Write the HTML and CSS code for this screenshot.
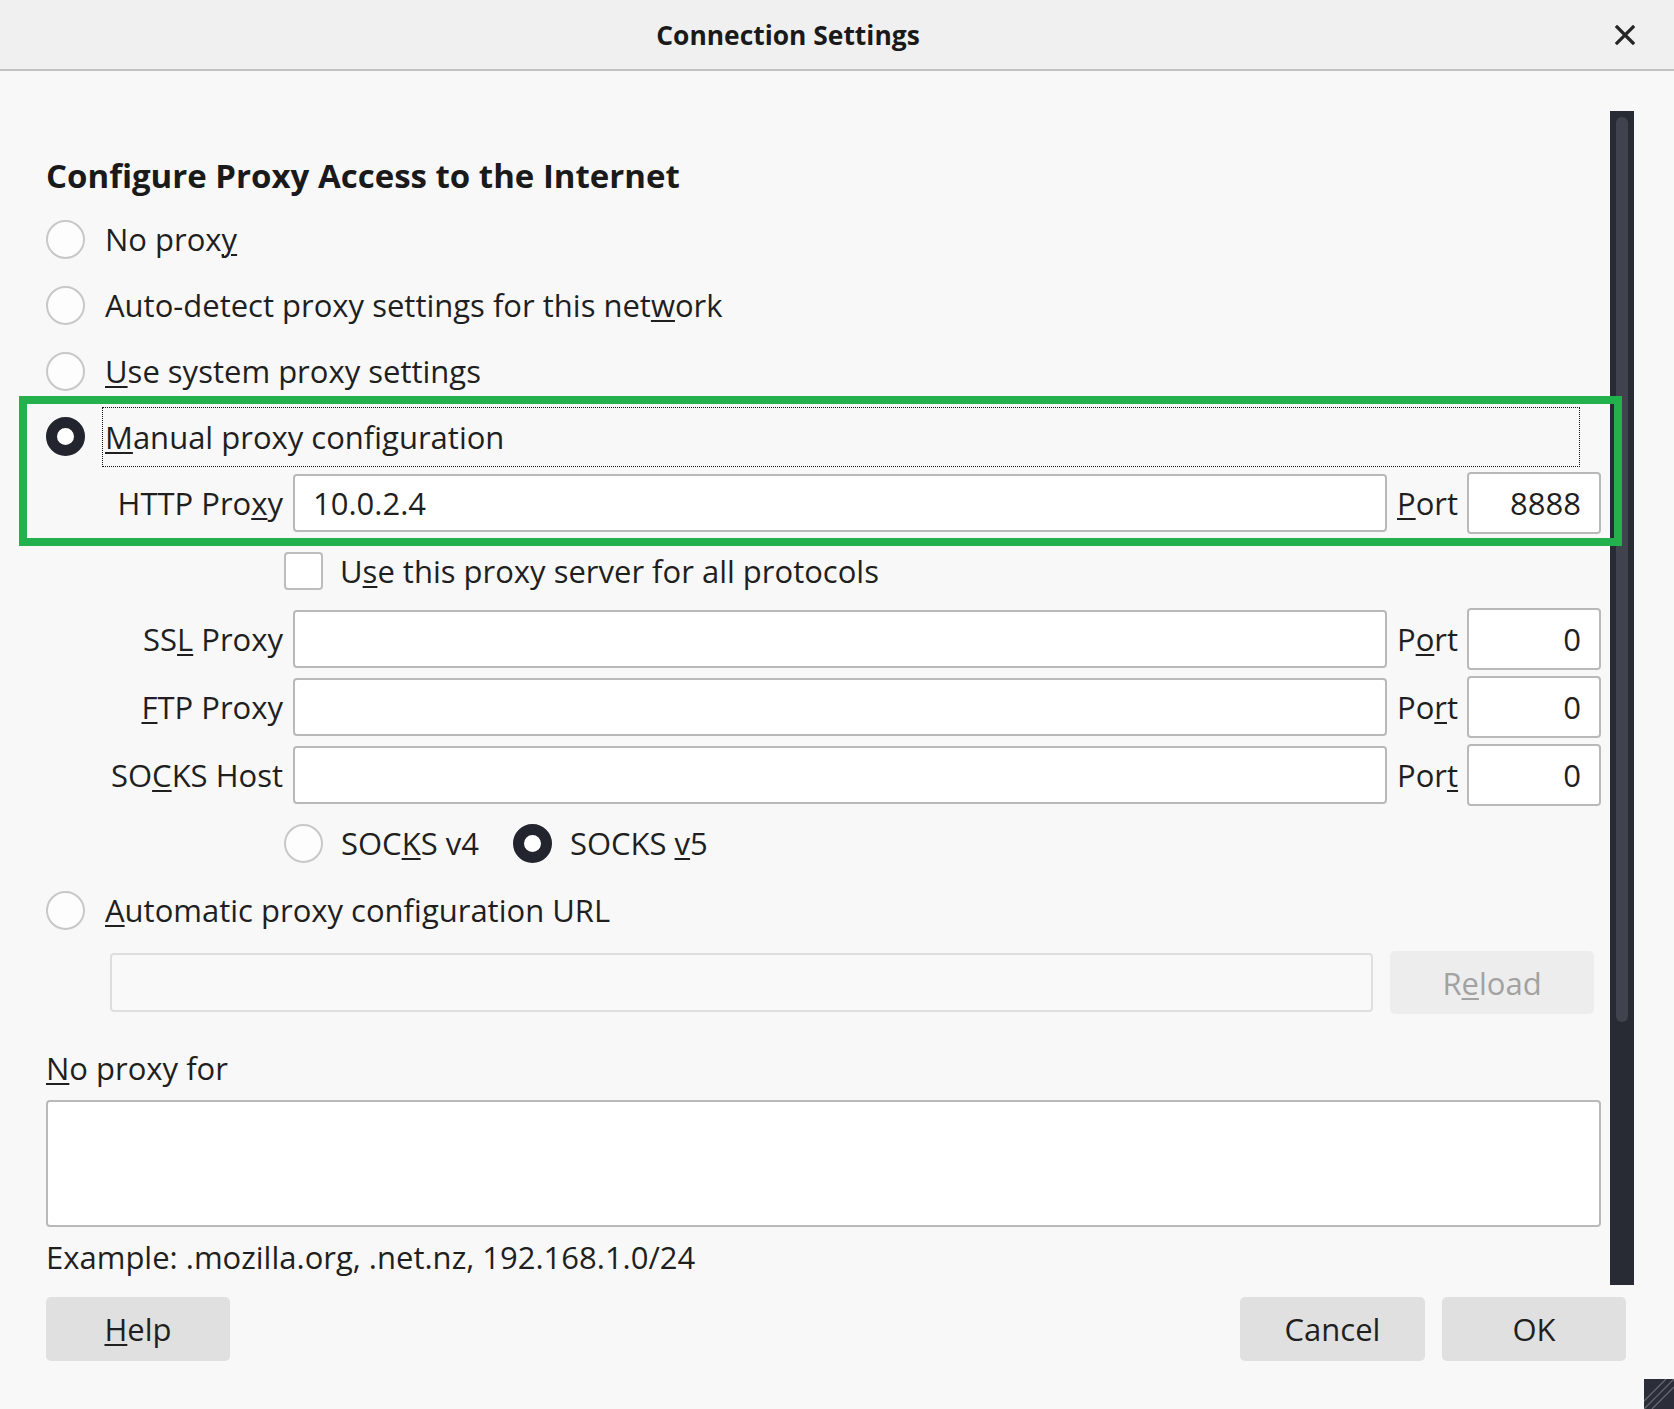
FILE: index.html
```html
<!DOCTYPE html>
<html lang="en">
<head>
<meta charset="utf-8">
<title>Connection Settings</title>
<link rel="stylesheet" href="styles.css">
</head>
<body>
<div class="window">
  <header class="titlebar">
    <div class="title">Connection Settings</div>
    <button class="close" aria-label="Close">
      <svg width="20" height="20" viewBox="0 0 20 20"><path d="M2 2 L18 18 M18 2 L2 18" stroke="#262626" stroke-width="3.2" stroke-linecap="square"/></svg>
    </button>
  </header>

  <div class="main">
    <div class="content">
      <h1 class="heading">Configure Proxy Access to the Internet</h1>

      <div class="radio-row"><span class="radio"></span><span class="rlabel">No prox<u>y</u></span></div>
      <div class="radio-row"><span class="radio"></span><span class="rlabel">Auto-detect proxy settings for this net<u>w</u>ork</span></div>
      <div class="radio-row"><span class="radio"></span><span class="rlabel"><u>U</u>se system proxy settings</span></div>
      <div class="radio-row manual"><span class="radio checked"></span><span class="rlabel focus"><u>M</u>anual proxy configuration</span></div>

      <div class="proxy-grid">
        <span class="plabel">HTTP Pro<u>x</u>y</span>
        <div class="field">10.0.2.4</div>
        <span class="portlabel"><u>P</u>ort</span>
        <div class="field port">8888</div>

        <div class="span-row"><span class="checkbox"></span><span>U<u>s</u>e this proxy server for all protocols</span></div>

        <span class="plabel">SS<u>L</u> Proxy</span>
        <div class="field"></div>
        <span class="portlabel">P<u>o</u>rt</span>
        <div class="field port">0</div>

        <span class="plabel"><u>F</u>TP Proxy</span>
        <div class="field"></div>
        <span class="portlabel">Po<u>r</u>t</span>
        <div class="field port">0</div>

        <span class="plabel">SO<u>C</u>KS Host</span>
        <div class="field"></div>
        <span class="portlabel">Por<u>t</u></span>
        <div class="field port">0</div>

        <div class="span-row">
          <span class="radio"></span><span class="vlabel">SOC<u>K</u>S v4</span>
          <span class="radio checked"></span><span class="vlabel">SOCKS <u>v</u>5</span>
        </div>
      </div>

      <div class="radio-row"><span class="radio"></span><span class="rlabel"><u>A</u>utomatic proxy configuration URL</span></div>

      <div class="url-row">
        <div class="field disabled"></div>
        <div class="btn reload">R<u>e</u>load</div>
      </div>

      <div class="np-label"><u>N</u>o proxy for</div>
      <div class="textarea"></div>
      <div class="example">Example: .mozilla.org, .net.nz, 192.168.1.0/24</div>
    </div>
    <div class="scrollbar"><div class="thumb"></div></div>
  </div>

  <footer class="footer">
    <div class="btn"><u>H</u>elp</div>
    <div class="spacer"></div>
    <div class="btn cancel">Cancel</div>
    <div class="btn">OK</div>
  </footer>

  <div class="highlight"></div>
  <svg class="grip" width="30" height="30" viewBox="0 0 30 30">
    <rect width="30" height="30" fill="#2b2e38"/>
    <path d="M0 22 L22 0 M0 30 L30 0 M8 30 L30 8" stroke="#6a6d76" stroke-width="1.2"/>
  </svg>
</div>
</body>
</html>
```

FILE: styles.css
```css
* { box-sizing: border-box; margin: 0; padding: 0; }
html, body { width: 1674px; height: 1409px; overflow: hidden; }
body {
  font-family: "Open Sans", "DejaVu Sans", sans-serif;
  font-size: 31px;
  color: #1f1f1f;
  background: #f8f8f8;
}
u { text-decoration-thickness: 2px; text-underline-offset: 3px; }

.window { position: relative; width: 1674px; height: 1409px; display: flex; flex-direction: column; background: #f8f8f8; }

.titlebar { height: 71px; flex: none; display: flex; align-items: center; background: #f0f0f0; border-bottom: 2px solid #c2c2c2; }
.title { flex: 1; text-align: center; font-weight: 700; font-size: 26.4px; color: #1a1a1a; }
.close { width: 98px; height: 69px; flex: none; display: flex; align-items: center; justify-content: center; background: none; border: 0; }

.main { height: 1214px; flex: none; display: flex; }
.content { width: 1610px; flex: none; padding-left: 46px; padding-right: 9px; }

.heading { margin-top: 85px; margin-bottom: 10px; height: 40px; line-height: 40px; font-size: 33px; font-weight: 700; color: #1a1a1a; }

.radio-row { height: 66px; display: flex; align-items: center; }
.radio-row.manual { height: 65px; }
.radio { flex: none; width: 39px; height: 39px; border-radius: 50%; border: 2px solid #c8c8c8; background: #fdfdfd; }
.radio.checked { border: 11px solid #23252e; background: #fff; }
.rlabel { margin-left: 17px; padding-left: 2px; border: 1px solid transparent; height: 60px; display: flex; align-items: center; white-space: nowrap; }
.rlabel.focus { flex: 1; margin-right: 21px; border: 1px dotted #111; }

.proxy-grid { display: grid; grid-template-columns: 237px 1094px 60px 134px; column-gap: 10px; grid-auto-rows: 68px; align-items: center; }
.plabel { text-align: right; white-space: nowrap; }
.portlabel { white-space: nowrap; }
.field { height: 58px; border: 2px solid #b9b9b9; border-radius: 4px; background: #fff; padding-left: 18px; display: flex; align-items: center; }
.field.port { height: 62px; padding-left: 0; padding-right: 18px; justify-content: flex-end; }
.span-row { grid-column: 1 / -1; display: flex; align-items: center; padding-left: 238px; height: 68px; }
.checkbox { flex: none; width: 39px; height: 38px; border: 2px solid #bdbdbd; border-radius: 4px; background: #fff; margin-right: 17px; }
.vlabel { margin-left: 18px; margin-right: 34px; white-space: nowrap; }

.url-row { margin-top: 8px; height: 63px; display: flex; align-items: center; padding-left: 64px; }
.field.disabled { width: 1263px; height: 59px; border-color: #dedede; background: #f9f9f9; }
.btn { flex: none; width: 184px; height: 64px; border-radius: 5px; background: #e0e0e0; display: flex; align-items: center; justify-content: center; }
.btn.reload { margin-left: 17px; width: 204px; height: 63px; background: #ededed; color: #a2a2a2; }

.np-label { margin-top: 28px; height: 52px; line-height: 52px; }
.textarea { margin-top: 6px; width: 1555px; height: 127px; border: 2px solid #b9b9b9; border-radius: 4px; background: #fff; }
.example { height: 60px; display: flex; align-items: center; }

.scrollbar { flex: none; width: 24px; height: 1174px; margin-top: 40px; background: #282a34; padding: 6px 6px; }
.thumb { width: 12px; height: 905px; border-radius: 6px; background: #40434d; }

.footer { flex: none; display: flex; padding: 12px 48px 0 46px; }
.spacer { flex: 1; }
.btn.cancel { width: 185px; margin-right: 17px; }

.highlight { position: absolute; left: 19px; top: 396px; width: 1603px; height: 150px; border: 8px solid #22b14c; pointer-events: none; }
.grip { position: absolute; right: 0; bottom: 0; }
```
